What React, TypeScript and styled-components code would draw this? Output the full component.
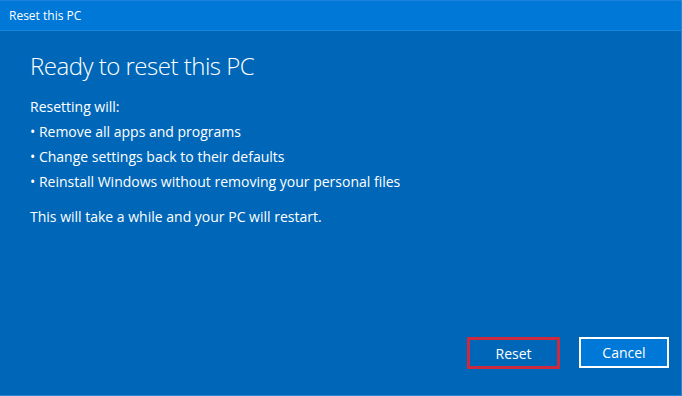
import { createGlobalStyle } from "styled-components";
import styled from "styled-components";

const GlobalStyle = createGlobalStyle`
  html, body {
    margin: 0;
    padding: 0;
    background: #0067b8;
  }
  * {
    box-sizing: border-box;
  }
`;

const Window = styled.div`
  width: 682px;
  height: 396px;
  display: flex;
  flex-direction: column;
  background-color: #0067b8;
  color: #ffffff;
  font-family: "Open Sans", "Noto Sans", sans-serif;
  border-right: 1px solid #2a86d4;
  border-bottom: 1px solid #2a86d4;
`;

const TitleBar = styled.div`
  height: 31px;
  flex-shrink: 0;
  background-color: #0078d7;
  border-top: 1px solid #1a84dc;
  border-bottom: 1px solid #1a84dc;
  display: flex;
  align-items: center;
  padding-left: 9px;
  font-size: 12px;
`;

const Content = styled.div`
  flex: 1;
  display: flex;
  flex-direction: column;
  padding: 17px 0 0 30px;
`;

const Heading = styled.h1`
  margin: 0;
  font-weight: 300;
  font-size: 24px;
  line-height: 36px;
  letter-spacing: -0.5px;
`;

const Body = styled.div`
  margin-top: 10px;
  font-size: 14px;
  line-height: 25px;
`;

const BulletList = styled.ul`
  margin: 0;
  padding: 0;
  list-style: none;
`;

const Bullet = styled.li`
  &::before {
    content: "• ";
  }
`;

const Note = styled.p`
  margin: 10px 0 0 0;
`;

const Footer = styled.div`
  margin-top: auto;
  display: flex;
  justify-content: flex-end;
  gap: 19px;
  padding: 0 12px 26px 0;
`;

const Button = styled.button<{ highlight?: boolean }>`
  width: ${p => (p.highlight ? "93px" : "90px")};
  height: ${p => (p.highlight ? "32px" : "31px")};
  font-family: inherit;
  font-size: 14px;
  color: #ffffff;
  background-color: ${p => (p.highlight ? "#0067b8" : "#0078d7")};
  border: ${p => (p.highlight ? "3px solid #cc2a3e" : "2px solid #ffffff")};
  padding: 0;
  cursor: pointer;
`;

export default function App() {
  return (
    <>
      <GlobalStyle />
      <Window>
        <TitleBar>Reset this PC</TitleBar>
        <Content>
          <Heading>Ready to reset this PC</Heading>
          <Body>
            <div>Resetting will:</div>
            <BulletList>
              <Bullet>Remove all apps and programs</Bullet>
              <Bullet>Change settings back to their defaults</Bullet>
              <Bullet>Reinstall Windows without removing your personal files</Bullet>
            </BulletList>
            <Note>This will take a while and your PC will restart.</Note>
          </Body>
          <Footer>
            <Button highlight>Reset</Button>
            <Button>Cancel</Button>
          </Footer>
        </Content>
      </Window>
    </>
  );
}
